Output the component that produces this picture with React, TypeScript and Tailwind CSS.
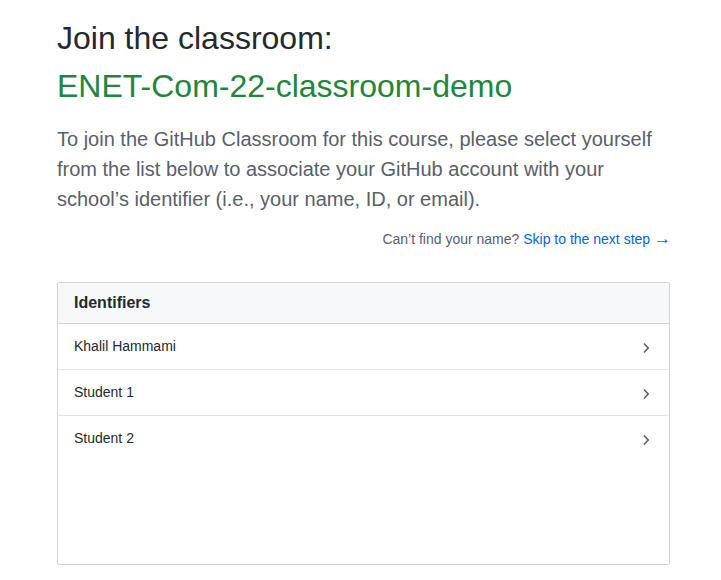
import React from 'react'

const students = ['Khalil Hammami', 'Student 1', 'Student 2']

function Chevron() {
  return (
    <svg width="8" height="12" viewBox="0 0 8 12" className="mt-[6px] shrink-0">
      <path d="M2 1.5l4.2 4.5L2 10.5" fill="none" stroke="#586069" strokeWidth="1.6" />
    </svg>
  )
}

export default function App() {
  return (
    <div className="min-h-[580px] bg-white" style={{ fontFamily: '"Liberation Sans", Arial, sans-serif' }}>
      <div className="w-[613px] ml-[57px] pt-[14px]">
        <h1 className="text-[32px] leading-[48px] font-normal text-[#24292e]">
          Join the classroom:
          <br />
          <span className="text-[#22863a]">ENET-Com-22-classroom-demo</span>
        </h1>
        <p className="mt-[14px] text-[20px] leading-[30px] text-[#586069]">
          To join the GitHub Classroom for this course, please select yourself from the list below to associate your
          GitHub account with your school’s identifier (i.e., your name, ID, or email).
        </p>
        <p className="mt-[15px] -mr-[1px] text-right text-[14px] leading-5 text-[#586069]">
          Can’t find your name?{' '}
          <a className="text-[#0366d6]">
            Skip to the next step <span className="text-[17px] leading-none">→</span>
          </a>
        </p>
        <div className="mt-[33px] h-[283px] border border-[#d1d5da] rounded-[2px]">
          <div className="h-[41px] px-4 flex items-center bg-[#f6f8fa] border-b border-[#d1d5da] text-[16px] font-bold text-[#24292e]">
            Identifiers
          </div>
          {students.map((s, i) => (
            <div
              key={s}
              className={
                'h-[46px] pl-4 pr-[19px] pt-3 flex justify-between text-[14px] leading-5 text-[#24292e] ' +
                (i < students.length - 1 ? 'border-b border-[#e1e4e8]' : '')
              }
            >
              <span>{s}</span>
              <Chevron />
            </div>
          ))}
        </div>
      </div>
    </div>
  )
}
